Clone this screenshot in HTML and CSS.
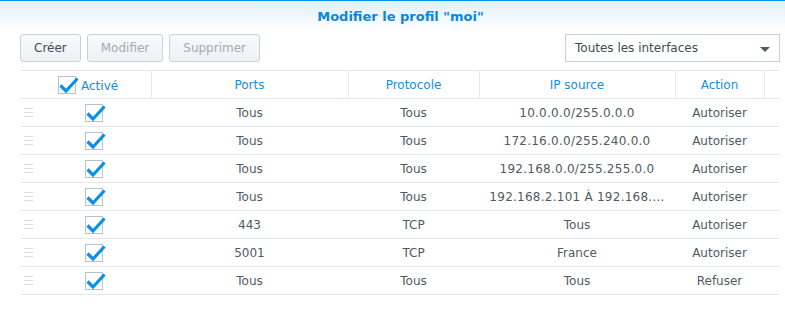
FILE: index.html
```html
<!DOCTYPE html>
<html lang="fr">
<head>
  <meta charset="UTF-8">
  <title>Modifier le profil</title>
  <link rel="stylesheet" href="styles.css">
</head>
<body>
  <div class="dialog">
    <div class="dialog-title">Modifier le profil "moi"</div>

    <div class="toolbar">
      <button class="btn">Créer</button>
      <button class="btn disabled">Modifier</button>
      <button class="btn disabled">Supprimer</button>
      <div class="select">
        <span>Toutes les interfaces</span>
        <span class="caret"></span>
      </div>
    </div>

    <table class="rules">
      <colgroup>
        <col style="width:131px">
        <col style="width:197px">
        <col style="width:131px">
        <col style="width:196px">
        <col style="width:89px">
        <col>
      </colgroup>
      <thead>
        <tr>
          <th class="col-active">
            <svg class="check" viewBox="0 0 18 18"><rect x="0.5" y="0.5" width="17" height="17"/><path d="M2.5 9.5 L8 15 L19.5 2.5"/></svg>Activé
          </th>
          <th>Ports</th>
          <th>Protocole</th>
          <th>IP source</th>
          <th>Action</th>
          <th></th>
        </tr>
      </thead>
      <tbody>
        <tr>
          <td class="col-active"><span class="handle"></span><svg class="check" viewBox="0 0 18 18"><rect x="0.5" y="0.5" width="17" height="17"/><path d="M2.5 9.5 L8 15 L19.5 2.5"/></svg></td>
          <td>Tous</td><td>Tous</td><td class="ip">10.0.0.0/255.0.0.0</td><td>Autoriser</td><td></td>
        </tr>
        <tr>
          <td class="col-active"><span class="handle"></span><svg class="check" viewBox="0 0 18 18"><rect x="0.5" y="0.5" width="17" height="17"/><path d="M2.5 9.5 L8 15 L19.5 2.5"/></svg></td>
          <td>Tous</td><td>Tous</td><td class="ip">172.16.0.0/255.240.0.0</td><td>Autoriser</td><td></td>
        </tr>
        <tr>
          <td class="col-active"><span class="handle"></span><svg class="check" viewBox="0 0 18 18"><rect x="0.5" y="0.5" width="17" height="17"/><path d="M2.5 9.5 L8 15 L19.5 2.5"/></svg></td>
          <td>Tous</td><td>Tous</td><td class="ip">192.168.0.0/255.255.0.0</td><td>Autoriser</td><td></td>
        </tr>
        <tr>
          <td class="col-active"><span class="handle"></span><svg class="check" viewBox="0 0 18 18"><rect x="0.5" y="0.5" width="17" height="17"/><path d="M2.5 9.5 L8 15 L19.5 2.5"/></svg></td>
          <td>Tous</td><td>Tous</td><td class="ip">192.168.2.101 À 192.168....</td><td>Autoriser</td><td></td>
        </tr>
        <tr>
          <td class="col-active"><span class="handle"></span><svg class="check" viewBox="0 0 18 18"><rect x="0.5" y="0.5" width="17" height="17"/><path d="M2.5 9.5 L8 15 L19.5 2.5"/></svg></td>
          <td>443</td><td>TCP</td><td>Tous</td><td>Autoriser</td><td></td>
        </tr>
        <tr>
          <td class="col-active"><span class="handle"></span><svg class="check" viewBox="0 0 18 18"><rect x="0.5" y="0.5" width="17" height="17"/><path d="M2.5 9.5 L8 15 L19.5 2.5"/></svg></td>
          <td>5001</td><td>TCP</td><td>France</td><td>Autoriser</td><td></td>
        </tr>
        <tr>
          <td class="col-active"><span class="handle"></span><svg class="check" viewBox="0 0 18 18"><rect x="0.5" y="0.5" width="17" height="17"/><path d="M2.5 9.5 L8 15 L19.5 2.5"/></svg></td>
          <td>Tous</td><td>Tous</td><td>Tous</td><td>Refuser</td><td></td>
        </tr>
      </tbody>
    </table>
  </div>
</body>
</html>
```

FILE: styles.css
```css
body {
  margin: 0;
  font-family: "DejaVu Sans", Verdana, sans-serif;
  font-size: 12px;
  color: #505a64;
  background: #fff;
}

.dialog {
  width: 785px;
  height: 309px;
  border-top: 1px solid #0d8ee6;
  background: linear-gradient(180deg, #e1eff9 0px, #ffffff 30px);
  box-sizing: border-box;
}

.dialog-title {
  height: 29px;
  line-height: 32px;
  padding-left: 16px;
  text-align: center;
  font-weight: bold;
  font-size: 13px;
  color: #0a86dc;
}

.toolbar {
  display: flex;
  align-items: center;
  gap: 6px;
  padding: 4px 5px 0 20px;
  height: 28px;
}

.btn {
  height: 28px;
  padding: 0 13px;
  font-family: inherit;
  font-size: 12px;
  color: #414b55;
  background: linear-gradient(180deg, #f8fafc, #eef1f5);
  border: 1px solid #c9d0d8;
  border-radius: 3px;
}

.btn.disabled {
  color: #a3abb4;
}

.select {
  margin-left: auto;
  width: 215px;
  height: 28px;
  box-sizing: border-box;
  border: 1px solid #c9d0d8;
  background: #fff;
  display: flex;
  align-items: center;
  justify-content: space-between;
  padding: 0 9px 0 9px;
  color: #414b55;
}

.caret {
  width: 0;
  height: 0;
  border-left: 5px solid transparent;
  border-right: 5px solid transparent;
  border-top: 5px solid #505a64;
  margin-top: 2px;
}

.rules {
  margin: 8px 5px 0 20px;
  width: 760px;
  border-collapse: collapse;
  table-layout: fixed;
}

.rules th,
.rules td {
  height: 27px;
  padding: 0;
  text-align: center;
  border-bottom: 1px solid #e4e9ee;
  white-space: nowrap;
}

.rules th {
  border-top: 1px solid #e4e9ee;
  border-left: 1px solid #e4e9ee;
  font-weight: normal;
  color: #1a8cde;
}

.rules th:first-child {
  border-left: none;
}

.rules td.ip {
  letter-spacing: 0.25px;
}

.rules th.col-active {
  text-align: left;
  padding-left: 38px;
}

.rules th .check {
  margin-right: 5px;
  vertical-align: -4px;
}

.rules td.col-active {
  text-align: left;
  padding-left: 4px;
}

.handle {
  display: inline-block;
  width: 9px;
  height: 7px;
  border-top: 1px solid #d8dde2;
  border-bottom: 1px solid #d8dde2;
  position: relative;
  vertical-align: middle;
  margin-right: 52px;
}

.handle::after {
  content: "";
  position: absolute;
  left: 0;
  right: 0;
  top: 3px;
  border-top: 1px solid #d8dde2;
}

.check {
  display: inline-block;
  width: 18px;
  height: 18px;
  overflow: visible;
  vertical-align: middle;
}

.check rect {
  fill: #fff;
  stroke: #b4c3d3;
  stroke-width: 1;
}

.check path {
  fill: none;
  stroke: #0b8fea;
  stroke-width: 3.2;
  stroke-linejoin: miter;
}
```
